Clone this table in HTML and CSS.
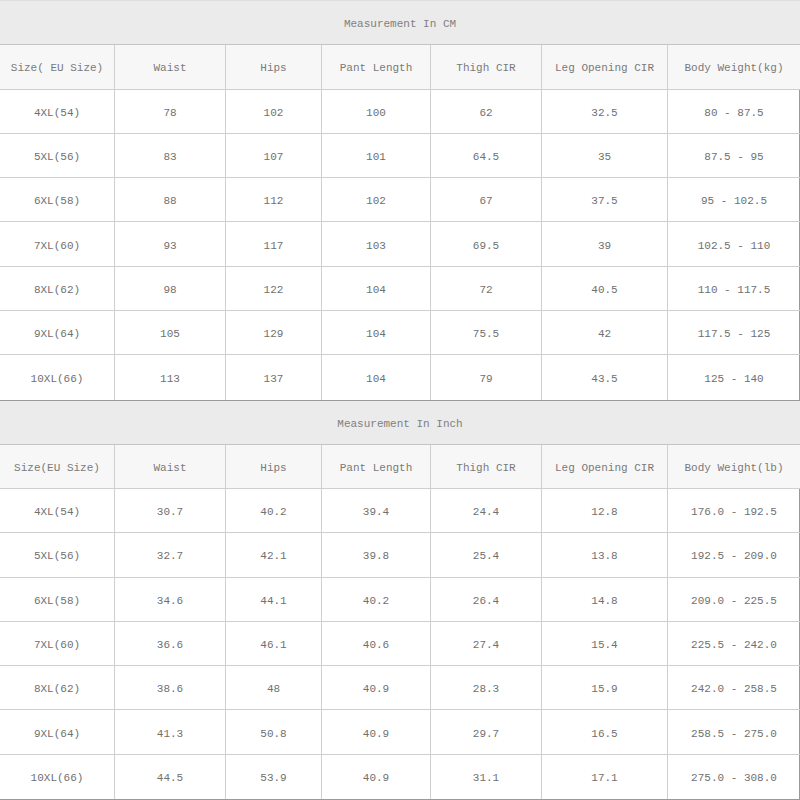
FILE: index.html
```html
<!DOCTYPE html>
<html>
<head>
<meta charset="utf-8">
<link rel="stylesheet" href="styles.css">
</head>
<body>
<div class="sheet">
  <div class="tbl">
    <div class="title">Measurement In CM</div>
    <div class="c h">Size( EU Size)</div><div class="c h">Waist</div><div class="c h">Hips</div><div class="c h">Pant Length</div><div class="c h">Thigh CIR</div><div class="c h">Leg Opening CIR</div><div class="c h">Body Weight(kg)</div>
    <div class="c">4XL(54)</div><div class="c">78</div><div class="c">102</div><div class="c">100</div><div class="c">62</div><div class="c">32.5</div><div class="c">80 - 87.5</div>
    <div class="c">5XL(56)</div><div class="c">83</div><div class="c">107</div><div class="c">101</div><div class="c">64.5</div><div class="c">35</div><div class="c">87.5 - 95</div>
    <div class="c">6XL(58)</div><div class="c">88</div><div class="c">112</div><div class="c">102</div><div class="c">67</div><div class="c">37.5</div><div class="c">95 - 102.5</div>
    <div class="c">7XL(60)</div><div class="c">93</div><div class="c">117</div><div class="c">103</div><div class="c">69.5</div><div class="c">39</div><div class="c">102.5 - 110</div>
    <div class="c">8XL(62)</div><div class="c">98</div><div class="c">122</div><div class="c">104</div><div class="c">72</div><div class="c">40.5</div><div class="c">110 - 117.5</div>
    <div class="c">9XL(64)</div><div class="c">105</div><div class="c">129</div><div class="c">104</div><div class="c">75.5</div><div class="c">42</div><div class="c">117.5 - 125</div>
    <div class="c">10XL(66)</div><div class="c">113</div><div class="c">137</div><div class="c">104</div><div class="c">79</div><div class="c">43.5</div><div class="c">125 - 140</div>
  </div>
  <div class="tbl">
    <div class="title">Measurement In Inch</div>
    <div class="c h">Size(EU Size)</div><div class="c h">Waist</div><div class="c h">Hips</div><div class="c h">Pant Length</div><div class="c h">Thigh CIR</div><div class="c h">Leg Opening CIR</div><div class="c h">Body Weight(lb)</div>
    <div class="c">4XL(54)</div><div class="c">30.7</div><div class="c">40.2</div><div class="c">39.4</div><div class="c">24.4</div><div class="c">12.8</div><div class="c">176.0 - 192.5</div>
    <div class="c">5XL(56)</div><div class="c">32.7</div><div class="c">42.1</div><div class="c">39.8</div><div class="c">25.4</div><div class="c">13.8</div><div class="c">192.5 - 209.0</div>
    <div class="c">6XL(58)</div><div class="c">34.6</div><div class="c">44.1</div><div class="c">40.2</div><div class="c">26.4</div><div class="c">14.8</div><div class="c">209.0 - 225.5</div>
    <div class="c">7XL(60)</div><div class="c">36.6</div><div class="c">46.1</div><div class="c">40.6</div><div class="c">27.4</div><div class="c">15.4</div><div class="c">225.5 - 242.0</div>
    <div class="c">8XL(62)</div><div class="c">38.6</div><div class="c">48</div><div class="c">40.9</div><div class="c">28.3</div><div class="c">15.9</div><div class="c">242.0 - 258.5</div>
    <div class="c">9XL(64)</div><div class="c">41.3</div><div class="c">50.8</div><div class="c">40.9</div><div class="c">29.7</div><div class="c">16.5</div><div class="c">258.5 - 275.0</div>
    <div class="c">10XL(66)</div><div class="c">44.5</div><div class="c">53.9</div><div class="c">40.9</div><div class="c">31.1</div><div class="c">17.1</div><div class="c">275.0 - 308.0</div>
  </div>
</div>
</body>
</html>
```

FILE: styles.css
```css
html, body {
  margin: 0;
  padding: 0;
  background: #ffffff;
}
.sheet {
  width: 800px;
  height: 800px;
  display: flex;
  flex-direction: column;
  font-family: "Liberation Mono", "DejaVu Sans Mono", monospace;
  font-size: 11px;
  color: #707070;
  border-top: 1px solid #dedede;
  box-sizing: border-box;
}
.tbl {
  flex: 1;
  display: grid;
  grid-template-columns: 115px 111px 96px 109px 111px 126px 132px;
  grid-template-rows: repeat(9, 1fr);
  border-right: 1px solid #9a9a9a;
  box-sizing: border-box;
}
.tbl + .tbl {
  border-top: 1px solid #9a9a9a;
}
.tbl:last-child {
  border-bottom: 1px solid #9a9a9a;
}
.title {
  grid-column: 1 / -1;
  background: #ebebeb;
  border-bottom: 1px solid #c4c4c4;
  display: flex;
  align-items: center;
  justify-content: center;
  padding-top: 3px;
  color: #808080;
}
.c {
  display: flex;
  align-items: center;
  justify-content: center;
  padding-top: 3px;
  border-bottom: 1px solid #cfcfcf;
  border-right: 1px solid #cfcfcf;
  white-space: nowrap;
}
.c:nth-child(7n+8) {
  border-right: none;
}
.tbl .c:nth-last-child(-n+7) {
  border-bottom: none;
}
.h {
  background: #f7f7f7;
  color: #7a7a7a;
}
```
